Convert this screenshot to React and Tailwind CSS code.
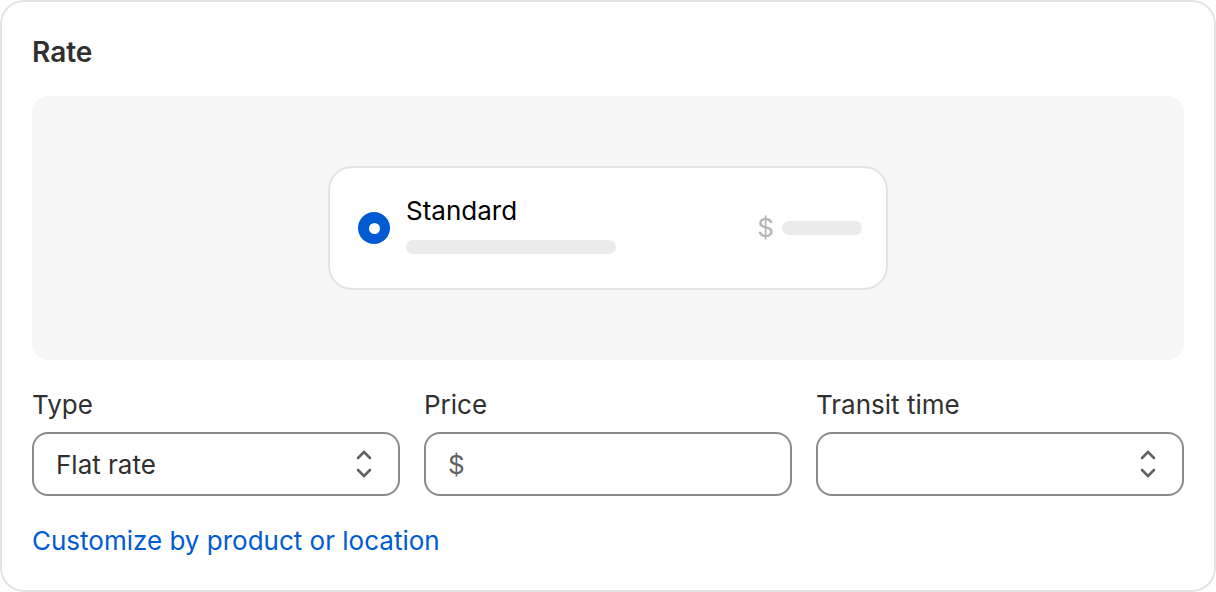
import React from 'react';

const font = { fontFamily: 'Inter, "Noto Sans", sans-serif' };

function SelectArrows() {
  return (
    <svg width="20" height="34" viewBox="0 0 20 34" fill="none" className="shrink-0">
      <path d="M4 11 L10 5 L16 11" stroke="#616161" strokeWidth="2.6" strokeLinecap="round" strokeLinejoin="round" />
      <path d="M4 23 L10 29 L16 23" stroke="#616161" strokeWidth="2.6" strokeLinecap="round" strokeLinejoin="round" />
    </svg>
  );
}

function Field({ label, children }) {
  return (
    <div className="flex flex-col">
      <label className="h-10 leading-[42px] text-[26px] text-[#303030] mb-2">{label}</label>
      <div className="h-16 rounded-2xl border-2 border-[#8a8a8a] bg-white flex items-center pl-[22px] pr-6">
        {children}
      </div>
    </div>
  );
}

export default function App() {
  return (
    <div className="w-[1216px] h-[592px] bg-white" style={font}>
      <div className="h-full rounded-[24px] border-2 border-[#e3e3e3] px-[30px] pt-[30px] pb-[30px] flex flex-col">
        <h2 className="h-10 leading-10 text-[28px] font-semibold text-[#303030]">Rate</h2>

        {/* preview */}
        <div className="mt-6 h-[264px] rounded-2xl bg-[#f7f7f7] flex items-center justify-center">
          <div className="w-[560px] h-[124px] rounded-[24px] border-2 border-[#e3e3e3] bg-white flex items-center pl-7 pr-6">
            <div className="w-8 h-8 rounded-full bg-[#005bd3] flex items-center justify-center shrink-0">
              <div className="w-[11px] h-[11px] rounded-full bg-white" />
            </div>
            <div className="ml-4 flex flex-col pb-[7px]">
              <span className="leading-8 text-[26px] text-[#000]">Standard</span>
              <div className="mt-[13px] w-[210px] h-[14px] rounded-full bg-[#ebebeb]" />
            </div>
            <div className="ml-auto flex items-center gap-2">
              <span className="text-[26px] leading-8 text-[#b5b5b5]">$</span>
              <div className="w-20 h-[14px] rounded-full bg-[#ebebeb]" />
            </div>
          </div>
        </div>

        <div className="mt-6 grid grid-cols-3 gap-6">
          <Field label="Type">
            <span className="text-[26px] text-[#303030] flex-1">Flat rate</span>
            <SelectArrows />
          </Field>
          <Field label="Price">
            <span className="text-[26px] text-[#616161]">$</span>
          </Field>
          <Field label="Transit time">
            <span className="flex-1" />
            <SelectArrows />
          </Field>
        </div>

        <a className="mt-6 h-10 leading-[42px] text-[26px] text-[#005bd3] self-start cursor-pointer">
          Customize by product or location
        </a>
      </div>
    </div>
  );
}
